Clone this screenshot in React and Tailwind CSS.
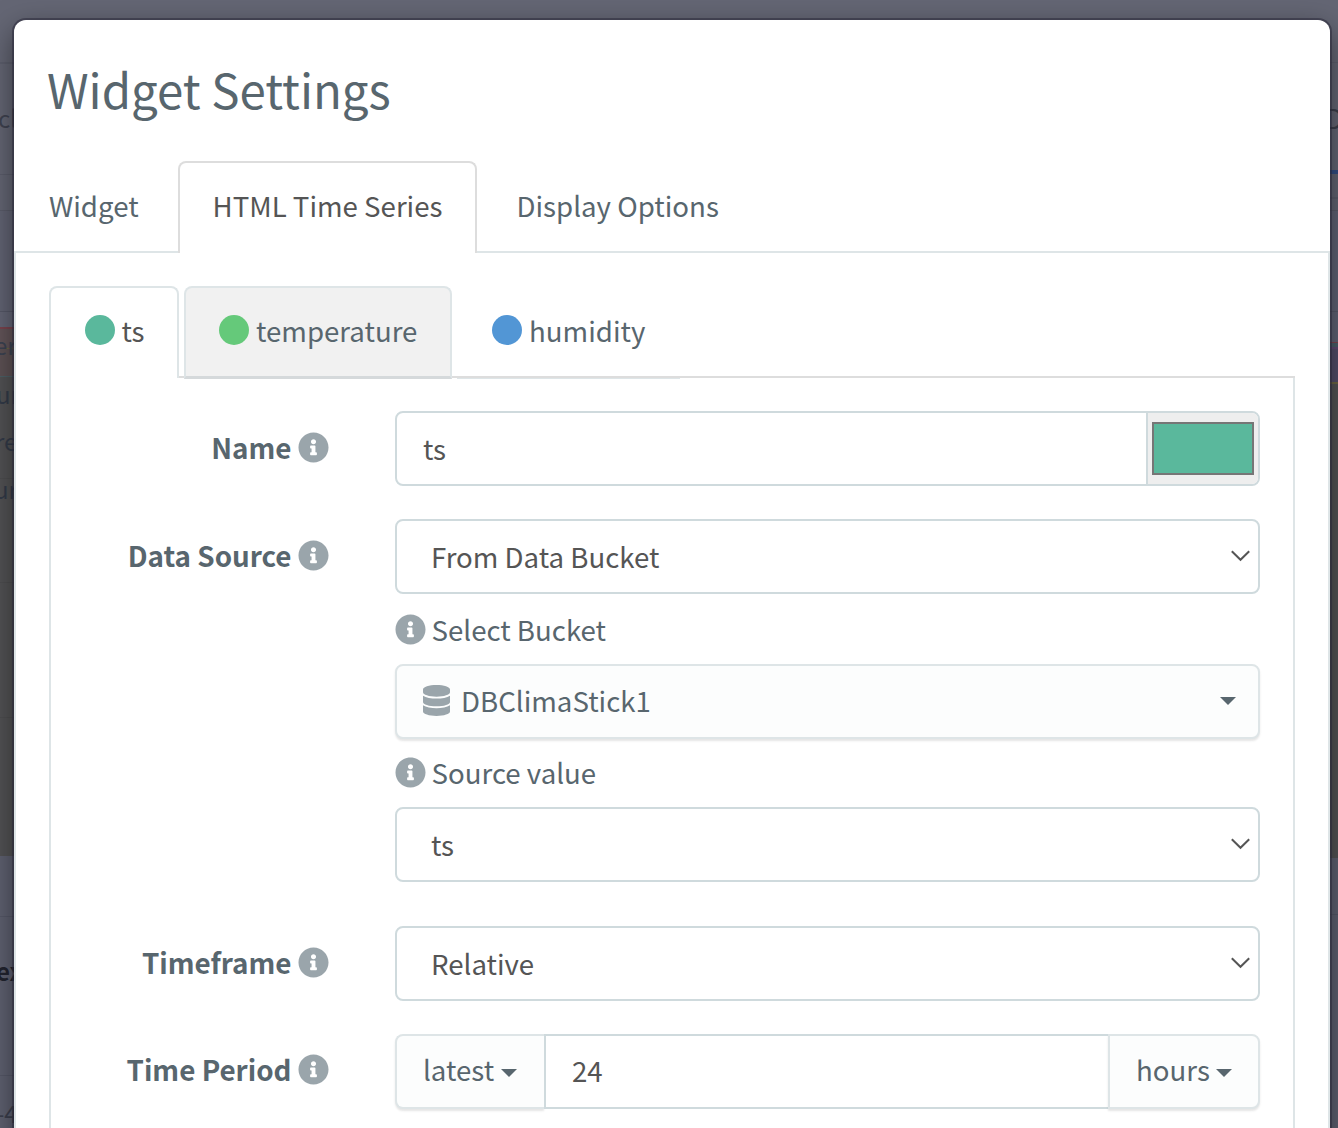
import React from "react";
import { FaInfoCircle, FaDatabase } from "react-icons/fa";

const LEFT_BANDS = [
  "h-[62px] bg-[#646674]",
  "h-[2px] bg-[#5d5f6d]",
  "h-[110px] bg-[#646674]",
  "h-[1px] bg-[#5b5d6b]",
  "h-[35px] bg-[#646674]",
  "h-[1px] bg-[#5a5c6a]",
  "h-[100px] bg-[#626474]",
  "h-[1px] bg-[#565868]",
  "h-[15px] bg-[#646676]",
  "h-[2px] bg-[#7a444e]",
  "h-[19px] bg-[#635559]",
  "h-[1px] bg-[#6b6543]",
  "h-[27px] bg-[#5e5255]",
  "h-[1px] bg-[#4d6167]",
  "h-[101px] bg-[#535355]",
  "h-[1px] bg-[#4e4e50]",
  "h-[103px] bg-[#535355]",
  "h-[1px] bg-[#4e4e50]",
  "h-[134px] bg-[#535355]",
  "h-[1px] bg-[#4e4e50]",
  "h-[138px] bg-[#535355]",
  "h-[60px] bg-[#5f6171]",
  "h-[1px] bg-[#565868]",
  "h-[158px] bg-[#5f6171]",
  "h-[1px] bg-[#565868]",
  "h-[60px] bg-[#5f6171]",
];

const RIGHT_BANDS = [
  "h-[62px] bg-[#646674]",
  "h-[1px] bg-[#5d5f6d]",
  "h-[107px] bg-[#646674]",
  "h-[4px] bg-[#334d83]",
  "h-[23px] bg-[#626472]",
  "h-[2px] bg-[#5b5d6b]",
  "h-[11px] bg-[#626472]",
  "h-[1px] bg-[#585a68]",
  "h-[100px] bg-[#606274]",
  "h-[1px] bg-[#565868]",
  "h-[30px] bg-[#606274]",
  "h-[1px] bg-[#7a444e]",
  "h-[4px] bg-[#4a5f69]",
  "h-[2px] bg-[#5e4a72]",
  "h-[33px] bg-[#524d69]",
  "h-[2px] bg-[#6b6543]",
  "h-[474px] bg-[#535355]",
  "h-[56px] bg-[#5f6171]",
  "h-[1px] bg-[#565868]",
  "h-[213px] bg-[#5f6171]",
];

const LEFT_WORDS = [
  ["cl", "left-[-2px] top-[98px] text-[#3f4250]"],
  ["er", "left-[-6px] top-[325px] text-[#3c4352]"],
  ["ur", "left-[-4px] top-[374px] text-[#333b49]"],
  ["re", "left-[-5px] top-[421px] text-[#333b49]"],
  ["ur", "left-[-6px] top-[469px] text-[#333b49]"],
  ["ex", "left-[-4px] top-[951px] text-[#22242f] font-bold"],
  ["-4", "left-[-4px] top-[1093px] text-[#3c3f4d]"],
];

function Backdrop() {
  return (
    <div className="absolute inset-0 flex justify-between overflow-hidden bg-[#646674]">
      <div className="relative w-[30px]">
        {LEFT_BANDS.map((c, i) => (
          <div key={i} className={c} />
        ))}
        {LEFT_WORDS.map(([t, c], i) => (
          <span key={i} className={`absolute text-[24px] leading-[40px] ${c}`}>
            {t}
          </span>
        ))}
      </div>
      <div className="relative w-[30px]">
        {RIGHT_BANDS.map((c, i) => (
          <div key={i} className={c} />
        ))}
        <span className="absolute left-[17px] top-[98px] text-[27px] leading-[40px] text-[#3c3f4b]">D</span>
      </div>
    </div>
  );
}

function Info() {
  return <FaInfoCircle className="size-[31px] shrink-0 text-[#9aa5ab]" />;
}

function Caret({ className = "" }) {
  return (
    <svg className={`shrink-0 ${className}`} width="16" height="8" viewBox="0 0 16 8">
      <path d="M0 0H16L8 8Z" fill="#58666e" />
    </svg>
  );
}

function Row({ label, className = "", children }) {
  return (
    <div className={`flex ${className}`}>
      <div className="flex h-[75px] w-[277.5px] shrink-0 items-center justify-end gap-[6px] pb-[3px]">
        <span className="text-[27.8px] font-bold">{label}</span>
        <Info />
      </div>
      <div className="ml-[66.5px] w-[865px]">{children}</div>
    </div>
  );
}

function Select({ value }) {
  return (
    <div className="flex h-[75px] items-center justify-between rounded-[8px] border-2 border-[#cfdadd] pl-[34px] pr-[8px] text-[#555]">
      <span className="pb-[2px]">{value}</span>
      <svg className="mb-[1px]" width="19" height="12" viewBox="0 0 19 12" fill="none" stroke="#555" strokeWidth="2">
        <path d="M0.8 1.2L9.5 9.8L18.2 1.2" />
      </svg>
    </div>
  );
}

function SubLabel({ children, className }) {
  return (
    <div className={`-ml-[0.5px] flex h-[40px] items-center gap-[6px] ${className}`}>
      <Info />
      <span>{children}</span>
    </div>
  );
}

const BUTTON = "flex items-center border-2 border-[#dee5e7] bg-[#fcfdfd] shadow-[0_2px_2px_rgba(90,90,90,0.15)]";

export default function App() {
  return (
    <div className="relative h-[1128px] w-[1338px] overflow-hidden pl-[14px] pt-[20px] font-['Noto_Sans_CJK_SC','Noto_Sans',sans-serif] text-[27.65px] leading-[40px] text-[#58666e]">
      <Backdrop />
      <div className="relative h-[1200px] w-[1316px] rounded-[12px] bg-white shadow-[0_0_0_2px_rgba(40,38,55,0.5),0_10px_30px_rgba(0,0,0,0.5)]">
        <h1 className="h-[141px] pl-[33px] pt-[39px] text-[47.4px] leading-[60px]">
          <span>Widget Settings</span>
        </h1>

        <div className="flex h-[92px]">
          <div className="flex w-[164px] items-center border-b-2 border-[#dee5e7] pb-[2px] pl-[35px]">Widget</div>
          <div className="flex w-[299px] items-center justify-center rounded-t-[8px] border-2 border-b-0 border-[#ddd] pb-[6px] text-[#555]">
            HTML Time Series
          </div>
          <div className="flex flex-1 items-center border-b-2 border-[#dee5e7] pb-[2px] pl-[39.5px]">Display Options</div>
        </div>

        <div className="h-[960px] border-x-2 border-[#dee5e7] px-[33px] pt-[33px]">
          <div className="flex h-[93px]">
            <div className="flex h-[92px] w-[130px] items-center gap-[7px] rounded-t-[8px] border-2 border-b-0 border-[#dee5e7] pb-[6px] pl-[33.5px] text-[#555]">
              <span className="size-[30px] rounded-full bg-[#5ab89c]" />
              <span>ts</span>
            </div>
            <div className="h-[92px] w-[5px] border-b-2 border-[#ddd]" />
            <div className="flex w-[268px] items-center gap-[7px] rounded-t-[8px] border-2 border-b-[3px] border-[#dee5e7] border-b-[#d5d9db] bg-[#f1f1f1] pb-[4px] pl-[33px]">
              <span className="size-[30px] rounded-full bg-[#65c97a]" />
              <span>temperature</span>
            </div>
            <div className="flex h-[92px] flex-1 items-center gap-[7px] border-b-2 border-[#ddd] pb-[2px] pl-[40px]">
              <span className="size-[30px] rounded-full bg-[#5296d5]" />
              <span>humidity</span>
            </div>
          </div>

          <div className="-mt-px h-[860px] border-x-2 border-[#dee5e7]">
            <div className="ml-[406px] h-px w-[223px] bg-[#dee5e7]" />
            <Row label="Name" className="mb-[33px] mt-[32px]">
              <div className="flex h-[75px] rounded-[8px] border-2 border-[#cfdadd] text-[#555]">
                <div className="flex flex-1 items-center pb-[2px] pl-[26px]">ts</div>
                <div className="flex w-[112px] items-center rounded-r-[6px] border-l-2 border-[#cfdadd] bg-[#eee] pl-[4px]">
                  <div className="h-[53px] w-[102px] border-2 border-[#767676] bg-[#5ab89c]" />
                </div>
              </div>
            </Row>

            <Row label="Data Source" className="mb-[44px]">
              <Select value="From Data Bucket" />
              <SubLabel className="mb-[15px] mt-[15px]">Select Bucket</SubLabel>
              <div className={`${BUTTON} h-[75px] rounded-[8px] pb-[2px] pl-[26px] pr-[22px]`}>
                <FaDatabase className="h-[31px] w-[27px] text-[#9aa5ab]" />
                <span className="ml-[11px] flex-1 pb-[2px]">DBClimaStick1</span>
                <Caret />
              </div>
              <SubLabel className="mb-[15px] mt-[13px]">Source value</SubLabel>
              <Select value="ts" />
            </Row>

            <Row label="Timeframe" className="mb-[33px]">
              <Select value="Relative" />
            </Row>

            <div className="flex">
              <div className="flex h-[75px] w-[277.5px] shrink-0 items-center justify-end gap-[6px] pb-[5px]">
                <span className="text-[27.8px] font-bold">Time Period</span>
                <Info />
              </div>
              <div className="ml-[66.5px] flex h-[75px] w-[865px]">
                <div className={`${BUTTON} w-[149px] rounded-l-[8px] border-r-0 pb-[5px] pl-[26px]`}>
                  latest
                  <Caret className="ml-[6.5px] mt-[8px]" />
                </div>
                <div className="flex w-[564px] items-center border-y-2 border-l-2 border-[#cfdadd] pb-[4px] pl-[26px] text-[#555]">24</div>
                <div className={`${BUTTON} w-[152px] rounded-r-[8px] pb-[5px] pl-[26px]`}>
                  hours
                  <Caret className="ml-[6px] mt-[8px]" />
                </div>
              </div>
            </div>
          </div>
        </div>
      </div>
    </div>
  );
}
